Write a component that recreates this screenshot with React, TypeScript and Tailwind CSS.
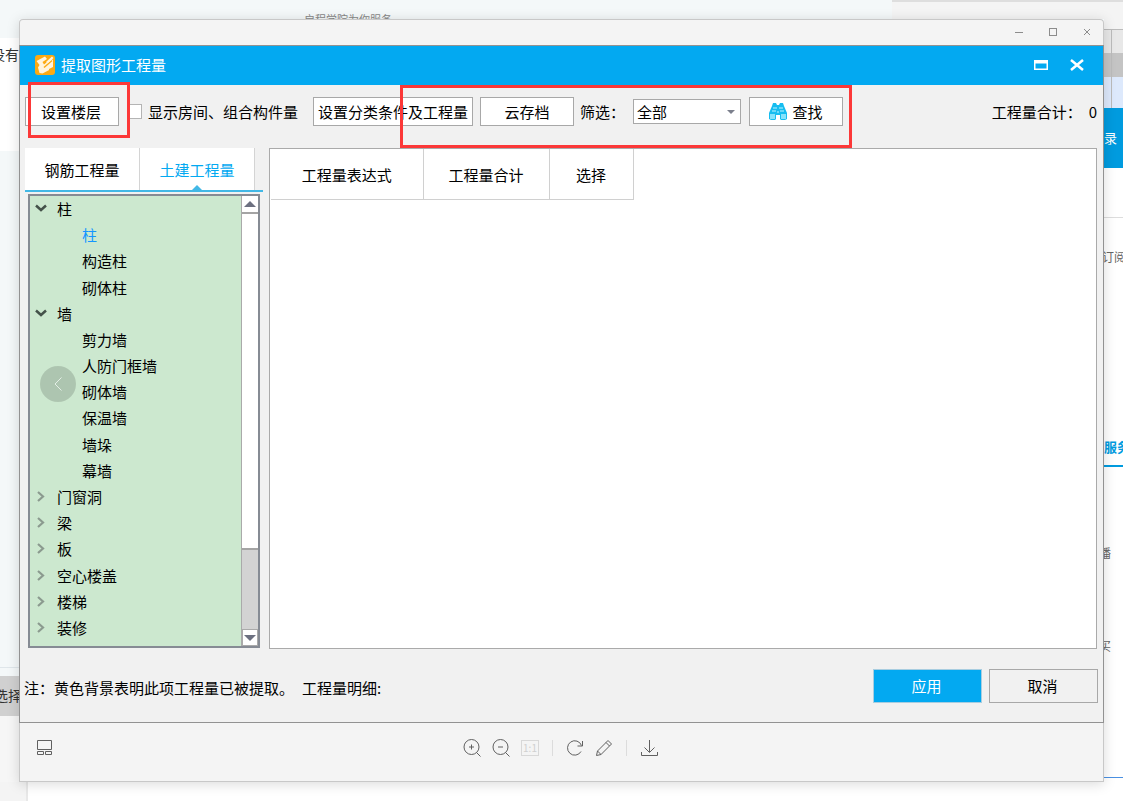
import { useState } from 'react';

interface TreeNode {
  label: string;
  open?: boolean;
  children?: string[];
}

const tree: TreeNode[] = [
  { label: '柱', open: true, children: ['柱', '构造柱', '砌体柱'] },
  { label: '墙', open: true, children: ['剪力墙', '人防门框墙', '砌体墙', '保温墙', '墙垛', '幕墙'] },
  { label: '门窗洞' },
  { label: '梁' },
  { label: '板' },
  { label: '空心楼盖' },
  { label: '楼梯' },
  { label: '装修' },
];

const tabs = ['钢筋工程量', '土建工程量'];

const toolButton = 'h-[29px] shrink-0 border border-[#a8a8a8] bg-white';

function AppLogo() {
  return (
    <svg className="size-5" viewBox="0 0 20 20" fill="none" aria-hidden="true">
      <rect width="20" height="20" rx="3" fill="#fcaa12" />
      <path d="M1.500 6 10 1.500l2 2.500-4.500 3L9 9.500 16 4l2 1v8L7.500 18.500 4.500 18 3 12.500 4.500 10z" fill="#fff4dd" />
      <path d="m9 12.500 8-7" stroke="#fcaa12" strokeWidth="1.500" />
      <path d="m11 7 6-5.500 1.500 1.500-6 5.500z" fill="#fff4dd" />
      <path d="m14 14 4-2v3l-4 2z" fill="#fcaa12" />
    </svg>
  );
}

function Binoculars() {
  return (
    <svg className="h-[19px] w-5" viewBox="0 0 20 19" aria-hidden="true">
      <path d="M5 1h3l1 2h2l1-2h3l1 3 3 7v6l-2 1h-4l-1-1v-4H8v4l-1 1H3l-2-1v-6l3-7z" fill="#16bdf0" />
      <path d="M2 12h5v5H2zM13 12h5v5h-5z" fill="#86e3fc" />
      <path d="M5 5h4v2H5zM11 5h4v2h-4zM4 8h4v2H4zM12 8h4v2h-4zM9 9h2v2H9z" fill="#69d8f8" />
    </svg>
  );
}

function Chevron({ open }: { open?: boolean }) {
  return (
    <svg className="size-3" viewBox="0 0 12 12" fill="none" aria-hidden="true">
      {open ? (
        <path d="m1 2.500 5 4.500 5-4.500" stroke="#44524a" strokeWidth="2.500" />
      ) : (
        <path d="m3 1 5 4.500L3 10" stroke="#8b9a8f" strokeWidth="2.200" />
      )}
    </svg>
  );
}

function Backdrop() {
  return (
    <div className="absolute inset-0 flex flex-col overflow-hidden bg-[#f4f8f9]">
      <div className="flex h-[19px] shrink-0 justify-between overflow-hidden">
        <p className="ml-[304px] pt-[11px] text-[11px] leading-4 text-[#888]">启程学院为你服务</p>
        <div className="w-[231px] border-t-2 border-[#dedede] bg-[#f4f4f4]" />
      </div>
      <div className="flex flex-1 justify-between">
        <div className="flex w-[19px] flex-col text-sm leading-5 whitespace-nowrap text-[#333]">
          <div className="mt-[19px] flex h-[113px] justify-end overflow-hidden bg-white pt-[6px]">没有</div>
          <div className="flex-1 border-b border-[#dfe6ea]" />
          <div className="mt-2 flex h-10 items-center overflow-hidden bg-[#d0d0d0] pb-[2px]">
            <span className="-ml-[6px]">选择</span>
          </div>
          <div className="h-[66px] bg-[#f6f6f6]" />
        </div>
        <div className="flex w-[19px] flex-col overflow-hidden bg-white text-xs whitespace-nowrap text-[#666]">
          <div className="h-[11px] border-b border-[#bbb] bg-[#f4f4f4]" />
          <div className="h-[23px] bg-[#e8e8e8] pl-[7px]">
            <div className="h-full border-l border-[#bbb]" />
          </div>
          <div className="h-6 bg-[#c4c4c4] pl-[7px]">
            <div className="h-full border-l border-[#bbb]" />
          </div>
          <div className="h-[31px] bg-[#dde9fc] pl-[7px]">
            <div className="h-full border-l border-[#bbb]" />
          </div>
          <div className="flex h-[60px] items-center bg-[#009bdf] text-[13px] text-white">录</div>
          <div className="h-[50px] border-b border-[#ddd]" />
          <div className="flex h-[78px] items-center">
            <span className="-ml-[2px]">订阅</span>
          </div>
          <div className="flex h-[171px] items-end border-b-2 border-[#009bdf] pb-[10px] text-[13px] font-bold text-[#009bdf]">
            服务
          </div>
          <div className="flex h-[171px] w-[7px] items-center justify-end overflow-hidden">播</div>
          <div className="flex h-4 w-[7px] items-center justify-end overflow-hidden">买</div>
          <div className="flex-1 border-b border-[#4a90e2]" />
          <div className="h-1" />
        </div>
      </div>
      <div className="h-[19px] shrink-0 bg-white">
        <div className="h-full w-7 border-r-2 border-[#e8e8e8] bg-[#f4f4f4]" />
      </div>
    </div>
  );
}

function ViewerTitleBar() {
  return (
    <div className="flex h-[26px] shrink-0 items-center justify-end gap-[22px] rounded-t-sm border border-b-0 border-[#c8c8c8] bg-[#f4f4f4] pr-[10px] pb-[2px] text-[#8c8c8c]">
      <button type="button" aria-label="最小化">
        <svg className="size-3" viewBox="0 0 12 12" stroke="currentColor">
          <path d="M2 6.5h8" />
        </svg>
      </button>
      <button type="button" aria-label="最大化">
        <svg className="size-3" viewBox="0 0 12 12" fill="none" stroke="currentColor">
          <rect x="2.5" y="2.5" width="7" height="7" />
        </svg>
      </button>
      <button type="button" aria-label="关闭">
        <svg className="size-3" viewBox="0 0 12 12" stroke="currentColor">
          <path d="m3 3 6 6M9 3 3 9" />
        </svg>
      </button>
    </div>
  );
}

function Toolbar() {
  return (
    <div className="relative flex h-[63px] shrink-0 items-center pt-3 pr-[6px] pb-[22px] pl-[5px] whitespace-nowrap">
      <button type="button" className={`w-[94px] pr-[2px] ${toolButton}`}>设置楼层</button>
      <label className="ml-2 flex items-center gap-[6px]">
        <input type="checkbox" className="size-[15px] appearance-none border border-[#b4b4b4] bg-white" />
        显示房间、组合构件量
      </label>
      <button type="button" className={`ml-[15px] w-40 ${toolButton}`}>设置分类条件及工程量</button>
      <button type="button" className={`ml-[7px] w-[94px] ${toolButton}`}>云存档</button>
      <label htmlFor="filter" className="ml-[6px]">筛选：</label>
      <div className="relative ml-2">
        <select id="filter" className="block h-[25px] w-[108px] appearance-none border border-[#a8a8a8] bg-white pl-[3px] leading-5">
          <option>全部</option>
        </select>
        <svg className="pointer-events-none absolute top-[11px] right-[6px] h-1 w-2" viewBox="0 0 8 4" aria-hidden="true">
          <path d="M0 0h8L4 4z" fill="#7b7f8c" />
        </svg>
      </div>
      <button type="button" className={`ml-2 flex w-[94px] items-center justify-center gap-[5px] pr-[2px] ${toolButton}`}>
        <Binoculars />
        查找
      </button>
      <p className="ml-auto flex gap-[7px]">
        <span>工程量合计：</span>
        <span>0</span>
      </p>

      {/* highlight frames */}
      <div className="pointer-events-none absolute -top-[3px] left-2 h-14 w-[102px] border-3 border-[#fc3838]" />
      <div className="pointer-events-none absolute top-0 left-[380px] h-[63px] w-[452px] border-3 border-[#fc3838]" />
    </div>
  );
}

function ComponentTree() {
  const [selected, setSelected] = useState('柱');

  return (
    <div className="mx-[3px] mt-[2px] mb-px flex flex-1 border-2 border-[#868b94] bg-[#cce8cf]">
      <ul className="grid flex-1 auto-rows-fr pb-[5px]">
        {tree.flatMap((node) => [
          <li key={node.label} className="flex items-center pl-[5px]">
            <button type="button" className="flex items-center gap-[10px]">
              <Chevron open={node.open} />
              {node.label}
            </button>
          </li>,
          ...(node.children ?? []).map((child) => (
            <li key={`${node.label}-${child}`} className="flex items-center pl-[52px]">
              <button
                type="button"
                onClick={() => setSelected(child)}
                className={child === selected ? 'text-[#1496ff]' : 'text-black'}
              >
                {child}
              </button>
            </li>
          )),
        ])}
      </ul>
      <div className="flex w-[17px] flex-col border-l border-[#aaa] bg-[#d3d3d3]">
        <button type="button" aria-label="向上滚动" className="flex h-4 items-center justify-center bg-white">
          <svg className="h-[6px] w-3" viewBox="0 0 12 6">
            <path d="M0 6h12L6 0z" fill="#6c7080" />
          </svg>
        </button>
        <div className="h-[338px] border-y-2 border-[#a4a4a4] bg-white" />
        <div className="flex-1" />
        <button type="button" aria-label="向下滚动" className="flex h-[17px] items-center justify-center border border-[#aaa] bg-white">
          <svg className="h-[6px] w-3" viewBox="0 0 12 6">
            <path d="M0 0h12L6 6z" fill="#6c7080" />
          </svg>
        </button>
      </div>
    </div>
  );
}

function QuantityDialog() {
  const [tab, setTab] = useState(1);

  return (
    <section className="relative flex flex-1 flex-col border border-[#929292] bg-[#f1f1f1]">
      <header className="flex h-[39px] shrink-0 items-center bg-[#03a9f1] pr-[18px] pb-px pl-[15px] text-white">
        <AppLogo />
        <h1 className="ml-[6px]">提取图形工程量</h1>
        <button type="button" aria-label="最大化" className="ml-auto">
          <svg className="h-3 w-4" viewBox="0 0 16 12">
            <path d="M1 1h14v10H1zM2.500 4.500v5h11v-5z" fill="currentColor" fillRule="evenodd" />
          </svg>
        </button>
        <button type="button" aria-label="关闭" className="ml-5">
          <svg className="h-3 w-4" viewBox="0 0 16 12" fill="none" stroke="currentColor" strokeWidth="2.500">
            <path d="m2 1 12 10M14 1 2 11" />
          </svg>
        </button>
      </header>

      <Toolbar />

      <div className="flex flex-1 gap-[6px] pr-[6px] pl-[5px]">
        <div className="flex w-[238px] shrink-0 flex-col">
          <div className="flex h-11 border-b-2 border-[#42b8e6]">
            {tabs.map((name, i) => (
              <button
                key={name}
                type="button"
                onClick={() => setTab(i)}
                className={`relative w-[115px] border-r border-[#d4d4d4] bg-white pt-[2px] ${i === tab ? 'text-[#03a9f1]' : 'text-black'}`}
              >
                {name}
                {i === tab && (
                  <svg className="absolute bottom-0 left-1/2 h-[5px] w-[10px] -translate-x-1/2" viewBox="0 0 10 5">
                    <path d="M0 5h10L5 0z" fill="#42b8e6" />
                  </svg>
                )}
              </button>
            ))}
          </div>
          <ComponentTree />
        </div>
        <div className="flex-1 border border-[#aaa] bg-white pl-px">
          <table className="table-fixed border-collapse">
            <thead>
              <tr className="h-[50px]">
                <th className="w-[152px] border-r border-b border-[#d0d0d0] pt-[2px] font-normal">工程量表达式</th>
                <th className="w-[126px] border-r border-b border-[#d0d0d0] pt-[2px] font-normal">工程量合计</th>
                <th className="w-[84px] border-r border-b border-[#d0d0d0] pt-[2px] font-normal">选择</th>
              </tr>
            </thead>
          </table>
        </div>
      </div>

      <div className="flex h-[73px] shrink-0 items-center pr-[5px] pl-1">
        <p className="flex gap-2 pt-1">
          <span>注：黄色背景表明此项工程量已被提取。</span>
          <span>工程量明细:</span>
        </p>
        <button type="button" className="ml-auto h-[34px] w-[109px] border border-[#a8cde0] bg-[#03a9f1] pr-[2px] text-white">
          应用
        </button>
        <button type="button" className="ml-[7px] h-[34px] w-[109px] border border-[#a8a8a8] bg-[#f1f1f1] pr-[2px]">取消</button>
      </div>

      <button
        type="button"
        aria-label="上一张"
        className="absolute top-1/2 left-5 flex size-9 -translate-y-1/2 items-center justify-center rounded-full bg-black/15"
      >
        <svg className="h-[14px] w-2" viewBox="0 0 8 14" fill="none" stroke="#e4efe6">
          <path d="M7.500 .5 1 7l6.500 6.500" />
        </svg>
      </button>
    </section>
  );
}

function ViewerToolbar() {
  return (
    <footer className="grid h-[59px] shrink-0 grid-cols-[1fr_auto_1fr] items-center border border-t-0 border-[#c8c8c8] bg-[#f4f4f4] pr-[2px] pb-2 text-[#606060]">
      <button type="button" aria-label="缩略图" className="ml-4 w-4">
        <svg className="size-4" viewBox="0 0 16 16" fill="none" stroke="currentColor">
          <path d="M1.500 .5h14v9h-14zM1.500 11.500h6v3h-6zM9.500 11.500h6v3h-6z" />
        </svg>
      </button>
      <div className="flex items-center gap-[11px]">
        <button type="button" aria-label="放大">
          <svg className="size-[18px]" viewBox="0 0 18 18" fill="none" stroke="currentColor">
            <circle cx="8.500" cy="8" r="7.500" />
            <path d="M8.500 5.500v5M6 8h5M13.500 13.500l4 4" />
          </svg>
        </button>
        <button type="button" aria-label="缩小">
          <svg className="size-[18px]" viewBox="0 0 18 18" fill="none" stroke="currentColor">
            <circle cx="8.500" cy="8" r="7.500" />
            <path d="M6 8h5M13.500 13.500l4 4" />
          </svg>
        </button>
        <button
          type="button"
          aria-label="原始大小"
          className="h-4 w-[18px] border border-[#d8d8d8] text-center text-[10px] leading-[14px] text-[#d0d0d0]"
        >
          1:1
        </button>
        <span className="mx-[2px] h-4 w-px bg-[#dcdcdc]" />
        <button type="button" aria-label="旋转">
          <svg className="size-[18px]" viewBox="0 0 18 18" fill="none" stroke="currentColor">
            <path d="M15 12.500A7.200 7.200 0 1 1 15.500 6.500M16.500 2v5h-5" />
          </svg>
        </button>
        <button type="button" aria-label="编辑">
          <svg className="size-[18px]" viewBox="0 0 18 18" fill="none" stroke="currentColor">
            <path d="M13 1.500 16.500 5 6 15.500l-4.500 1 1-4.500zM11 3.500 14.500 7M2.500 12 6 15.500" />
          </svg>
        </button>
        <span className="mx-[2px] h-4 w-px bg-[#dcdcdc]" />
        <button type="button" aria-label="下载">
          <svg className="size-[18px]" viewBox="0 0 18 18" fill="none" stroke="currentColor">
            <path d="M9.500 1v12M4.500 8.500l5 5 5-5M1.500 13v3.500h16V13" />
          </svg>
        </button>
      </div>
    </footer>
  );
}

export default function App() {
  return (
    <div className="relative flex min-h-screen flex-col p-[19px] font-['Noto_Sans_CJK_SC',sans-serif] text-[15px] leading-5 text-black">
      <Backdrop />
      <main className="relative flex flex-1 flex-col shadow-[0_2px_12px_rgba(0,0,0,0.15)]">
        <ViewerTitleBar />
        <QuantityDialog />
        <ViewerToolbar />
      </main>
    </div>
  );
}
